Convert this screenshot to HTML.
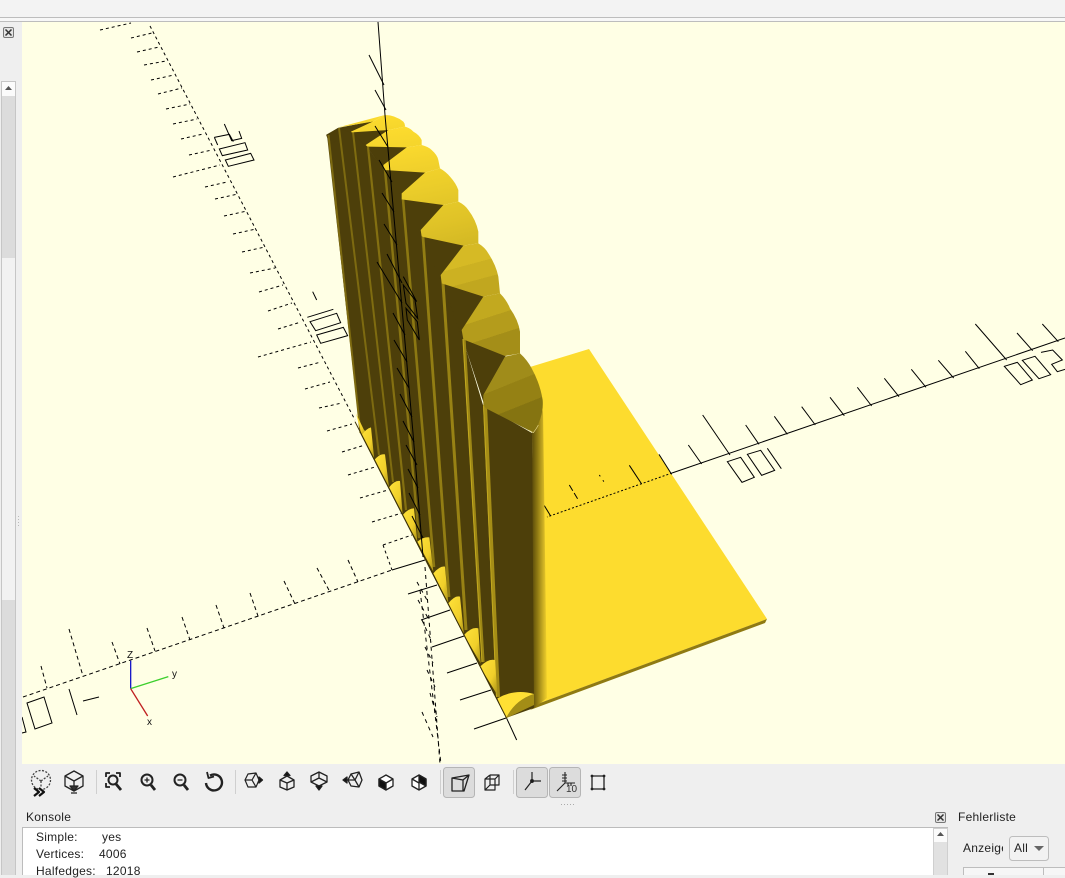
<!DOCTYPE html>
<html><head><meta charset="utf-8"><style>
html,body{margin:0;padding:0;width:1065px;height:875px;overflow:hidden;background:#efefef;font-family:"Liberation Sans",sans-serif;font-size:12px;color:#222}
.a{position:absolute;white-space:nowrap;letter-spacing:.25px}
svg{position:absolute;left:0;top:0}
</style></head><body>
<svg width="1065" height="875" viewBox="0 0 1065 875">
<defs>
<linearGradient id="sg" x1="0" y1="0" x2="1" y2="0"><stop offset="0" stop-color="#5a4a0b"/><stop offset=".35" stop-color="#8d7812"/><stop offset=".75" stop-color="#cdb024"/><stop offset="1" stop-color="#f2d12b"/></linearGradient>
<linearGradient id="bp" x1="0" y1="0" x2="1" y2="1"><stop offset="0" stop-color="#ffe23a"/><stop offset=".6" stop-color="#f0cf2a"/><stop offset="1" stop-color="#a89116"/></linearGradient>
<linearGradient id="c1" x1=".35" y1="0" x2=".65" y2="1"><stop offset="0" stop-color="#a08c1a"/><stop offset=".38" stop-color="#a08c1a"/><stop offset=".38" stop-color="#958114"/><stop offset=".68" stop-color="#958114"/><stop offset=".68" stop-color="#857411"/><stop offset="1" stop-color="#857411"/></linearGradient>
<linearGradient id="c2" x1=".35" y1="0" x2=".65" y2="1"><stop offset="0" stop-color="#c2a91f"/><stop offset=".38" stop-color="#c2a91f"/><stop offset=".38" stop-color="#b49c1c"/><stop offset=".68" stop-color="#b49c1c"/><stop offset=".68" stop-color="#a48e18"/><stop offset="1" stop-color="#a48e18"/></linearGradient>
<linearGradient id="c3" x1=".35" y1="0" x2=".65" y2="1"><stop offset="0" stop-color="#d6ba25"/><stop offset=".4" stop-color="#d6ba25"/><stop offset=".4" stop-color="#ccb122"/><stop offset=".7" stop-color="#ccb122"/><stop offset=".7" stop-color="#c1a71f"/><stop offset="1" stop-color="#c1a71f"/></linearGradient>
<linearGradient id="c4" x1=".35" y1="0" x2=".65" y2="1"><stop offset="0" stop-color="#e6c929"/><stop offset=".45" stop-color="#e0c327"/><stop offset="1" stop-color="#d4b924"/></linearGradient>
<linearGradient id="c5" x1=".35" y1="0" x2=".65" y2="1"><stop offset="0" stop-color="#f2d22b"/><stop offset=".5" stop-color="#ebcd2a"/><stop offset="1" stop-color="#e3c628"/></linearGradient>
<linearGradient id="c6" x1=".35" y1="0" x2=".65" y2="1"><stop offset="0" stop-color="#fbda2e"/><stop offset="1" stop-color="#efcf2b"/></linearGradient>
<linearGradient id="c7" x1=".35" y1="0" x2=".65" y2="1"><stop offset="0" stop-color="#fddc2e"/><stop offset="1" stop-color="#f5d52c"/></linearGradient>
</defs>

<!-- window chrome -->
<rect x="0" y="0" width="1065" height="17" fill="#f3f3f3"/>
<rect x="0" y="17" width="1065" height="1" fill="#bdbdbd"/>
<rect x="0" y="18" width="1065" height="3" fill="#f7f7f7"/>
<rect x="0" y="21" width="1065" height="1" fill="#bdbdbd"/>

<!-- viewport -->
<rect x="22" y="22" width="1043" height="742" fill="#ffffe5"/>

<!-- plate -->
<polygon points="530,367 589,349 767,619 540,703" fill="#fddc2e"/>
<polygon points="540,703 767,619 765,623 530,710" fill="#8f7a12"/>

<!-- axes behind model -->
<g fill="none" stroke="#000" stroke-width="1">
<line x1="672" y1="473" x2="1065" y2="338"/>
<line x1="672" y1="473" x2="547" y2="517" stroke-dasharray="2 2"/>
<g transform="translate(480 340) scale(.33333)" stroke-width="3">
<line x1="193" y1="497" x2="212" y2="528"/><line x1="268" y1="435" x2="295" y2="480" stroke-dasharray="20 8"/><line x1="358" y1="405" x2="375" y2="430" stroke-dasharray="5 14"/><line x1="448" y1="376" x2="485" y2="432"/><line x1="537" y1="343" x2="575" y2="403"/>
</g>
<g transform="translate(680 300) scale(.33333)" stroke-width="3">
<path d="M25 435L65 492M68 345L150 465M197 375L237 433M283 349L322 403M365 320L406 375M450 292L493 347M532 262L575 318M613 235L657 290M694 208L738 262M775 181L821 234M856 154L898 206M886 72L980 180M1011 99L1058 152M1087 72L1135 125"/>
<path d="M142 485L182 472L223 532L186 547ZM202 463L242 451L284 511L245 526ZM262 445L304 506M973 199L1012 187L1057 240L1022 254ZM1027 181L1065 169L1112 224L1077 236ZM1083 157L1118 150L1147 180L1115 193L1132 215L1155 208"/>
</g>

<g stroke-dasharray="3 3">
<line x1="150" y1="26" x2="355" y2="420"/>
<path d="M100 30L131 23M131 38L152 33M137 52L159 47M144 65L166 61M151 80L174 75M158 94L182 88M166 109L190 104M173 124L197 119M181 139L203 134M189 155L212 150M173 177L220 165M205 187L227 182M215 199L238 194M224 216L247 211M233 234L256 229M242 252L265 247M250 273L275 268M259 292L283 285M268 311L292 303M278 329L301 322M258 357L311 342M298 368L321 362M305 389L330 382M319 408L342 403M327 431L352 424M342 452L365 445M348 475L375 467M360 498L388 490M372 522L402 513M383 545L412 535M383 545L392 570"/>
</g>
<g transform="scale(.33333)" stroke-width="3">
<path d="M673 372L695 422L725 415L717 393M643 412L688 403L700 425M643 412L653 435M658 447L735 428L743 450L667 467ZM676 480L752 460L762 480L685 499Z"/>
</g>
<g transform="translate(230 270) scale(.33333)" stroke-width="3">
<path d="M248 65L260 90M232 142L310 118M240 155L320 130L332 158L257 182ZM260 195L340 172L353 197L272 220Z"/>
</g>

<g stroke-dasharray="4 3">
<line x1="23" y1="697" x2="392" y2="570"/>
<path d="M41 666L47 688M69 629L83 676M112 642L120 664M147 628L155 651M182 617L190 640M216 605L224 628M250 593L258 616M284 581L295 604M317 568L330 592M348 560L358 582"/>
</g>
<line x1="392" y1="570" x2="425" y2="560"/>
<path d="M27 703L44 697L52 723L35 729ZM22 717L26 732L22 733M69 689L77 715M83 701L99 697"/>

<g stroke-dasharray="4 4">
<path d="M425 567L440 764M420 590L441 764"/>
<path d="M417 582L427 600M418 600L428 618M422 620L432 642M425 647L433 663M427 670L435 687M430 693L437 717M422 712L433 737"/>
</g>
</g>

<!-- dark body -->
<polygon points="327,135 338,128 352,132 367,147 384,170 402,199 422,237 442,283 463,339 483,405 532,433 537,693 534,708 506,718 360,433" fill="#4d3f0a"/>

<!-- right side gradient of front fin -->
<polygon points="532,432 543,410 547,698 534,708" fill="url(#sg)"/>

<!-- dark top triangles -->
<g transform="translate(320 100) scale(.33333)" fill="#4d3f0a" stroke="#4d3f0a" stroke-width="3" stroke-linejoin="round">
<polygon points="20,105 55,85 60,120 30,130"/>
<polygon points="55,85 158,65 93,95 96,97"/>
<polygon points="95,97 205,90 137,135 141,141"/>
<polygon points="142,140 260,142 190,195 192,210"/>
<polygon points="192,210 315,218 245,280 246,297"/>
<polygon points="246,297 370,315 302,390 306,410"/>
<polygon points="306,410 430,437 362,525 366,550"/>
<polygon points="366,550 490,590 425,690 430,718"/>
<polygon points="430,718 555,768 490,885 498,925"/>
</g>

<!-- strips -->
<g fill="none">
<path d="M328.500 135L360.500 433" stroke="#7d6a10" stroke-width="2"/>
<path d="M339 128L379 455" stroke="#7d6a10" stroke-width="2"/>
<path d="M353 132L393 482" stroke="#7f6c10" stroke-width="2"/>
<path d="M368 147L406 510" stroke="#847011" stroke-width="2.200"/>
<path d="M385 170L419 538" stroke="#887412" stroke-width="2.400"/>
<path d="M403 199L434 567" stroke="#8c7812" stroke-width="2.600"/>
<path d="M423 237L449 597" stroke="#927d13" stroke-width="2.800"/>
<path d="M443 283L466 630" stroke="#988214" stroke-width="3"/>
<path d="M464 339L483 662" stroke="#9d8715" stroke-width="3.200"/>
<path d="M485 405L498 697" stroke="#a58d16" stroke-width="4"/>
<path d="M463 339L482 662M483.500 405L496.500 697" stroke="#c4aa20" stroke-width=".9"/>
</g>

<!-- caps -->
<g transform="translate(320 100) scale(.33333)">
<polygon points="55,82 195,45 158,65" fill="url(#c7)"/>
<path d="M93 95L158 65L195 45Q225 45 250 65Q256 72 255 80L205 90L95 97Z" fill="url(#c7)"/>
<path d="M137 135L205 90L255 80Q272 85 280 95Q298 105 305 120L305 135L260 142L142 140Z" fill="url(#c7)"/>
<path d="M190 195L260 142L305 135Q325 140 335 150Q352 165 355 180L360 205L315 218L192 210Z" fill="url(#c6)"/>
<path d="M245 280L315 218L360 205Q378 215 390 230Q408 250 415 270L415 305L370 315L245 298Z" fill="url(#c5)"/>
<path d="M302 390L370 315L415 305Q435 315 445 330Q468 360 475 395L475 430L430 437L305 410Z" fill="url(#c4)"/>
<path d="M362 525L430 437L475 430Q495 442 505 460Q528 495 535 530L540 580L490 590L365 550Z" fill="url(#c3)"/>
<path d="M425 690L490 590L540 580Q560 600 570 625Q595 660 600 695L600 760L555 768L430 718Z" fill="url(#c2)"/>
<path d="M490 885L555 770L600 760Q622 780 635 805Q660 850 668 900Q672 950 640 998L498 925L490 915Z" fill="url(#c1)"/>
<path d="M625 990L640 998Q650 985 655 975" fill="none" stroke="#e6d88a" stroke-width="2"/>
</g>

<!-- bumps -->
<g transform="translate(340 400) scale(.33333)" fill="url(#bp)">
<path d="M48 40Q60 65 72 90L85 100L65 105Z"/>
<path d="M65 105Q80 85 93 82L103 180Z"/>
<path d="M103 180Q120 160 135 163L147 262Z"/>
<path d="M147 262Q165 240 180 243L188 345Z"/>
<path d="M188 345Q205 325 222 325L232 425Z"/>
<path d="M232 425Q250 410 268 412L280 515Z"/>
<path d="M280 520Q300 497 315 500L325 610Z"/>
<path d="M325 610Q345 585 360 590L372 705Z"/>
<path d="M372 705Q395 680 415 685L422 790Z"/>
<path d="M420 800Q445 775 465 780L472 885Z"/>
<path d="M582 882L582 915L498 955Q525 900 582 882Z" fill="#a38d16"/>
<path d="M472 895Q525 865 582 882Q525 900 498 955Z" fill="#ffe034"/>
<path d="M45 65L500 955" fill="none" stroke="#3a3008" stroke-width="3"/>
<line x1="500" y1="955" x2="530" y2="1020" stroke="#000" stroke-width="3"/>
</g>

<!-- solid ticks on base side -->
<path d="M408 594L437 585M421 620L450 610M432 647L464 636M447 673L477 663M460 700L491 690M474 729L506 718" stroke="#000" fill="none"/>

<!-- Z axis over the model -->
<g stroke="#000" fill="none" stroke-width="1">
<path d="M378 22L385 115L413 433L423 557"/>
<path d="M369 55L384 85M375 90L386 110M375 126L388 147M379 160L392 182M382 193L394 212M384 224L397 245M387 254L402 283M377 262L402 303M393 313L405 335M394 340L407 362M397 368L409 388M400 394L412 417M403 421L414 442M406 445L417 465M408 469L418 488M409 493L420 515M412 516L423 538"/>
<g transform="translate(320 100) scale(.33333)" stroke-width="3">
<path d="M250 530L290 605M250 555L285 600L293 655L258 610ZM258 625L292 665L298 720L262 660Z"/>
</g>
</g>

<!-- gizmo -->
<g transform="translate(0 600) scale(.33333)" stroke-width="4" fill="none">
<line x1="392" y1="182" x2="392" y2="266" stroke="#1a1ac8"/>
<line x1="392" y1="266" x2="505" y2="230" stroke="#3ccf2d"/>
<line x1="392" y1="266" x2="443" y2="348" stroke="#c02020"/>
</g>
<text x="127" y="658" font-size="10" font-family="Liberation Sans, sans-serif" fill="#111">Z</text>
<text x="172" y="677" font-size="10" font-family="Liberation Sans, sans-serif" fill="#111">y</text>
<text x="147" y="725" font-size="10" font-family="Liberation Sans, sans-serif" fill="#111">x</text>

<!-- left panel -->
<rect x="0" y="22" width="22" height="853" fill="#efefef"/>
<g fill="none" stroke="#555" stroke-width="1">
<rect x="3.500" y="27.500" width="10" height="10" rx="1.500" fill="#e4e4e4" stroke="#777"/>
<path d="M5.500 29.500L11.500 35.500M11.500 29.500L5.500 35.500" stroke="#333" stroke-width="1.500"/>
</g>
<rect x="1.500" y="81.500" width="14" height="793" fill="#e1e1e1" stroke="#c6c6c6"/>
<rect x="2" y="82" width="13" height="14" fill="#fbfbfb"/>
<polygon points="5,90 12,90 8.500,86" fill="#555"/>
<rect x="2" y="96" width="13" height="162" fill="#dcdcdc"/>
<rect x="2" y="258" width="13" height="342" fill="#f2f2f2"/>
<rect x="2" y="600" width="13" height="275" fill="#dcdcdc"/>
<g fill="#bbb"><rect x="18" y="516" width="1" height="1"/><rect x="18" y="519" width="1" height="1"/><rect x="18" y="522" width="1" height="1"/><rect x="18" y="525" width="1" height="1"/></g>

<!-- toolbar background -->
<rect x="22" y="764" width="1043" height="111" fill="#efefef"/>
<rect x="443.500" y="767.500" width="31" height="30" rx="3" fill="#dcdcdc" stroke="#b5b5b5"/>
<rect x="516.500" y="767.500" width="31" height="30" rx="3" fill="#dcdcdc" stroke="#b5b5b5"/>
<rect x="549.500" y="767.500" width="31" height="30" rx="3" fill="#dcdcdc" stroke="#b5b5b5"/>
<g fill="#cfcfcf"><rect x="96" y="770" width="1" height="24"/><rect x="235" y="770" width="1" height="24"/><rect x="440" y="770" width="1" height="24"/><rect x="513" y="770" width="1" height="24"/></g>
<g fill="#aaa"><rect x="561" y="804" width="1" height="1"/><rect x="564" y="804" width="1" height="1"/><rect x="567" y="804" width="1" height="1"/><rect x="570" y="804" width="1" height="1"/><rect x="573" y="804" width="1" height="1"/></g>

<!-- icons -->
<g fill="none" stroke="#222" stroke-width="1.300" stroke-linejoin="round">
<g stroke-dasharray="2 1.500" stroke="#444">
<circle cx="41" cy="780" r="9.500"/>
<path d="M41 781L34 776M41 781L48 776M41 781L41 788"/>
</g>
<path d="M34 788L39 792L34 796M39 788L44 792L39 796" stroke-width="2.200" stroke="#111"/>
<path d="M74 771L83 776L83 786L74 791L65 786L65 776ZM65 776L74 781L83 776M74 781L74 786"/>
<path d="M70 786H78L74 791ZM71 793H77" fill="#333"/>

<path d="M106 777V773H110M116 773H120V777M106 783V787H110" stroke-width="1.800"/>
<circle cx="113" cy="780" r="4.500" stroke-width="2"/>
<path d="M116 784L121 790" stroke-width="2.800"/>

<circle cx="147" cy="780" r="5.500" stroke-width="2"/><path d="M144.500 780H149.500M147 777.500V782.500"/><path d="M151 785L155 790" stroke-width="2.800"/>
<circle cx="180" cy="780" r="5.500" stroke-width="2"/><path d="M177.500 780H182.500"/><path d="M184 785L188 790" stroke-width="2.800"/>
<path d="M210 775.500A8 8 0 1 1 206 783" stroke-width="2.400"/><path d="M207 772L208.500 778L214 776.500" stroke-width="1.800"/>

<path d="M248 774L256 773L259 780L256 787L248 787L245 780ZM245 780L252 780L256 787M252 780L256 773" stroke-width="1.200"/><path d="M259 777L262.500 780L259 783Z" fill="#111"/>
<path d="M287 776L294 780L294 787L287 790L280 787L280 780ZM280 780L287 783L294 780M287 783V790"/><path d="M284 775.500L287 772L290 775.500Z" fill="#111"/>
<path d="M319 772L327 776L327 782L319 786L311 782L311 776ZM311 782L319 778L327 782M319 772V778"/><path d="M316 786L319 790L322 786Z" fill="#111"/>
<path d="M351 774L359 772L362 780L359 787L351 786L348 780ZM351 774L355 780L359 772M348 780H355L359 787"/><path d="M347 777L343 780L347 783Z" fill="#111"/>
<path d="M386 775L393 779L393 786L386 790L379 786L379 779Z" fill="#fff"/><path d="M379 779L386 783V790L379 786Z" fill="#111"/><path d="M379 779L386 783L393 779"/>
<path d="M419 775L426 779L426 786L419 790L412 786L412 779Z" fill="#fff"/><path d="M419 775L426 779L426 786L419 782Z" fill="#111"/><path d="M412 779L419 783V790"/>

<path d="M452 778L469 775L464 791L452 791ZM452 778V791H463V780ZM463 780L469 775" stroke-width="1.300"/>
<path d="M485 779H495V790H485ZM490 775H499V785H495M485 779L490 775M495 779L499 775M490 775V785H495M485 790L490 785" stroke-width="1.200"/>

<path d="M532 772V781M532 781L541 781M532 781L525 790" stroke-width="1.200"/><circle cx="532" cy="781" r="1.300" fill="#111"/>
<path d="M565 772V783H575M565 783L557 791M562 775H567M562 778H567M562 781H567M568 783V786M571 783V786" stroke-width="1.100"/>
<rect x="592" y="776" width="12" height="13" stroke-width="1.300"/><g fill="#222" stroke="none"><circle cx="592" cy="776" r="1.400"/><circle cx="604" cy="776" r="1.400"/><circle cx="592" cy="789" r="1.400"/><circle cx="604" cy="789" r="1.400"/></g>
</g>
<text x="566" y="792" font-size="10" font-family="Liberation Sans, sans-serif" fill="#333">10</text>

<!-- console -->
<rect x="22.500" y="827.500" width="925" height="50" fill="#fff" stroke="#bcbcbc"/>
<rect x="933.500" y="828.500" width="14" height="50" fill="#e1e1e1" stroke="#cfcfcf"/>
<rect x="934" y="829" width="13" height="13" fill="#fbfbfb"/>
<polygon points="937,836 944,836 940.500,832" fill="#555"/>
<rect x="935.500" y="812.500" width="10" height="10" rx="1.500" fill="#e4e4e4" stroke="#777"/>
<path d="M937.500 814.500L943.500 820.500M943.500 814.500L937.500 820.500" stroke="#333" stroke-width="1.500"/>
<rect x="1009.500" y="836.500" width="39" height="24" rx="3" fill="#f2f2f2" stroke="#bdbdbd"/>
<polygon points="1034,846 1044,846 1039,851" fill="#666"/>
<rect x="963.500" y="867.500" width="110" height="20" fill="#f6f6f6" stroke="#bdbdbd"/>
<rect x="1043" y="868" width="1" height="8" fill="#bdbdbd"/>
<rect x="988" y="873" width="6" height="2" fill="#333"/>
</svg>

<div class="a" style="left:26px;top:810px">Konsole</div>
<div class="a" style="left:36px;top:830px">Simple:</div><div class="a" style="left:102px;top:830px">yes</div>
<div class="a" style="left:36px;top:847px">Vertices:</div><div class="a" style="left:99px;top:847px">4006</div>
<div class="a" style="left:36px;top:864px">Halfedges:</div><div class="a" style="left:106px;top:864px">12018</div>
<div class="a" style="left:958px;top:810px">Fehlerliste</div>
<div class="a" style="left:963px;top:841px;width:40px;overflow:hidden">Anzeige</div>
<div class="a" style="left:1014px;top:841px">All</div>
</body></html>
